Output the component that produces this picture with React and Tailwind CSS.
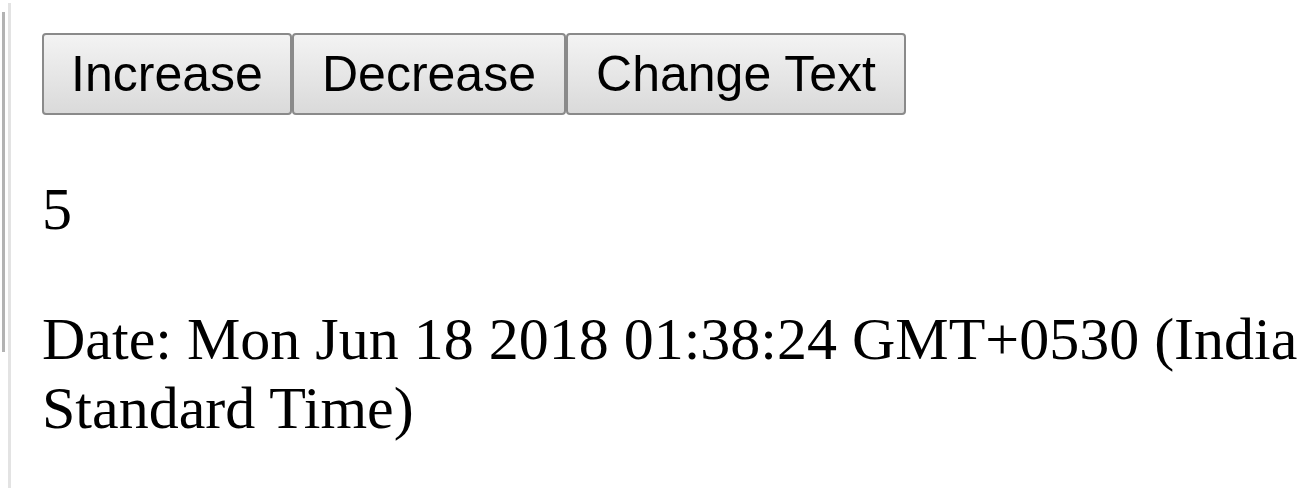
export default function App() {
  const btn =
    "h-[82px] flex items-center justify-center border-2 border-[#8a8a8a] rounded-[4px] bg-gradient-to-b from-[#f3f3f3] to-[#dadada] text-black text-[50px] leading-none font-['Liberation_Sans',Arial,sans-serif] shrink-0";
  return (
    <div className="flex h-[491px] w-[1299px] bg-white overflow-hidden">
      <div className="flex items-start shrink-0 w-[11px]">
        <div className="ml-[2px] mt-[12px] w-[3px] h-[340px] bg-[#b3b3b3]" />
        <div className="ml-[3px] mt-[3px] w-[3px] h-[485px] bg-[#e3e3e3]" />
      </div>
      <div className="pl-[31px] pt-[33px] font-['Liberation_Serif','Times_New_Roman',serif] text-black">
        <div className="flex">
          <button className={`${btn} w-[250px]`}>Increase</button>
          <button className={`${btn} w-[274px]`}>Decrease</button>
          <button className={`${btn} w-[340px]`}>Change Text</button>
        </div>
        <p className="mt-[60px] text-[60px] leading-[69px]">5</p>
        <p className="mt-[61px] text-[60px] leading-[69px] whitespace-nowrap">
          Date: Mon Jun 18 2018 01:38:24 GMT+0530 (India
          <br />
          Standard Time)
        </p>
      </div>
    </div>
  );
}
